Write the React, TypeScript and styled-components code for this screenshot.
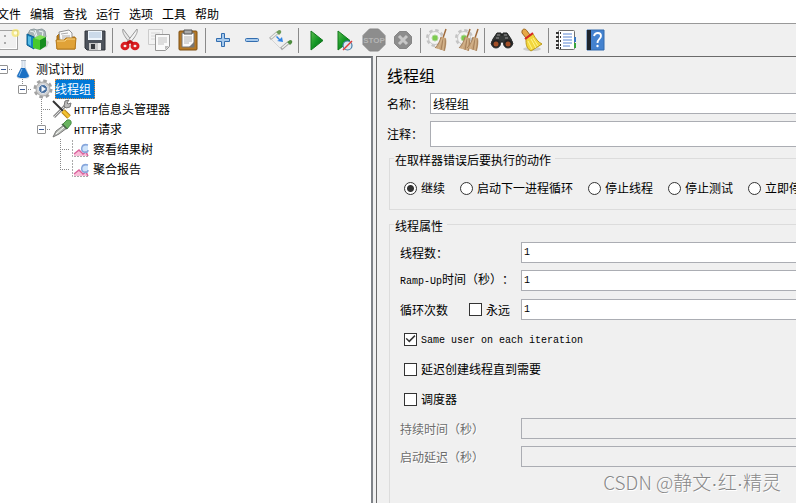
import React from "react";
import styled, { createGlobalStyle, css } from "styled-components";

const GlobalStyle = createGlobalStyle`
  * { box-sizing: border-box; }
  html, body { margin: 0; }
  body {
    background: #f0f0f0;
    color: #000;
    font: 12px/16px "Noto Sans CJK SC", sans-serif;
    text-spacing-trim: space-all;
    overflow: hidden;
  }
  button, input { font: inherit; color: inherit; margin: 0; }
`;

const Window = styled.div`
  position: relative;
  display: flex;
  flex-direction: column;
  height: 100vh;
  overflow: hidden;
`;

const MenuBar = styled.nav`
  display: flex;
  gap: 9px;
  height: 24px;
  padding-top: 6px;
  background: #fff;
  border-bottom: 1px solid #999;
  white-space: nowrap;
`;

const MenuItem = styled.button`
  flex: none;
  height: 16px;
  padding: 0;
  border: 0;
  background: none;
  line-height: 16px;
  &:first-child { margin-left: -3px; }
`;

const ToolBar = styled.div`
  display: flex;
  align-items: center;
  height: 32px;
  margin-left: -7px;
`;

const ToolButton = styled.button`
  display: grid;
  place-items: center;
  flex: 0 0 29px;
  height: 28px;
  padding: 0;
  border: 0;
  background: none;
`;

const ToolSeparator = styled.span`
  flex: 0 0 1px;
  height: 25px;
  margin: 0 2px 0 3px;
  background: #8a8a8a;
`;

const Split = styled.div`
  display: flex;
  flex: 1;
  gap: 3px;
  min-height: 0;
`;

const TreePane = styled.aside`
  flex: 0 0 373px;
  background: #fff;
  border: solid #7f8388;
  border-width: 2px 2px 0 0;
  border-top-color: #6b6e71;
  overflow: hidden;
`;

const TreeList = styled.ul`
  list-style: none;
  margin: 1px 0 0 -1px;
  padding: 0;
`;

const TreeRow = styled.li<{ $depth: number }>`
  display: flex;
  align-items: center;
  height: 20px;
  padding-left: ${(p) => p.$depth * 19}px;
  white-space: nowrap;
`;

const dotsDown = "repeating-linear-gradient(to bottom, #888 0 1px, transparent 1px 2px)";
const dotsAcross = "repeating-linear-gradient(to right, #888 0 1px, transparent 1px 2px)";

const Branch = styled.span<{ $line: number }>`
  display: flex;
  align-items: center;
  flex: 0 0 15px;
  height: 20px;
  background:
    ${dotsDown} 4px 0 / 1px ${(p) => p.$line}px no-repeat,
    ${dotsAcross} 4px 10px / 10px 1px no-repeat;
`;

const Handle = styled.button`
  width: 9px;
  height: 9px;
  padding: 0;
  border: 1px solid #929292;
  border-radius: 1px;
  background: linear-gradient(#3c5a96, #3c5a96) center / 5px 1px no-repeat #fff;
`;

const TreeIcon = styled.span`
  display: grid;
  flex: 0 0 20px;
  margin-right: 2px;
`;

const TreeLabel = styled.span<{ $selected?: boolean }>`
  height: 20px;
  line-height: 20px;
  ${(p) =>
    p.$selected &&
    css`
      padding-right: 4px;
      color: #fff;
      background: #0078d7;
      outline: 1px dotted #e08a38;
      outline-offset: -1px;
    `}
`;

const Latin = styled.span`
  font: 400 10px/16px "Liberation Mono", monospace;
`;

const Editor = styled.main`
  flex: 1;
  min-width: 0;
  display: flex;
  flex-direction: column;
  border: solid #6b6b6b;
  border-width: 1px 0 0 1px;
  padding-left: 10px;
  overflow: hidden;
`;

const Form = styled.form`
  display: flex;
  flex-direction: column;
  flex: 1;
  margin-right: -12px;
`;

const Title = styled.h1`
  margin: 6px 0;
  font-size: 16px;
  font-weight: 400;
  line-height: 24px;
`;

const Field = styled.div<{ $gap?: number }>`
  display: flex;
  align-items: center;
  margin-bottom: ${(p) => p.$gap ?? 7}px;
`;

const FieldLabel = styled.label<{ $wide?: boolean; $disabled?: boolean }>`
  flex: 0 0 ${(p) => (p.$wide ? 121 : 43)}px;
  white-space: nowrap;
  ${(p) => p.$disabled && "color: #6d6d6d; text-shadow: 1px 1px #fff;"}
`;

const TextInput = styled.input<{ $tall?: boolean }>`
  flex: 1;
  min-width: 0;
  height: ${(p) => (p.$tall ? 26 : 21)}px;
  padding: 0 2px;
  border: 1px solid #abadb3;
  border-radius: 0;
  background: #fff;
  &:disabled { background: #f0f0f0; }
`;

const NumberInput = styled(TextInput)`
  font: 400 10px/16px "Liberation Mono", monospace;
`;

const Group = styled.fieldset<{ $fill?: boolean }>`
  min-width: 0;
  margin: 0 0 0 2px;
  padding: 0 0 0 10px;
  border: 1px solid #dcdcdc;
  ${(p) => p.$fill && "flex: 1; border-bottom: 0; margin-top: 4px;"}
`;

const Legend = styled.legend`
  margin-left: -6px;
  padding: 4px 4px 0 1px;
  line-height: 16px;
`;

const RadioRow = styled.div`
  display: flex;
  gap: 15px;
  height: 41px;
  align-items: center;
  padding: 0 0 1px 4px;
`;

const Choice = styled.label`
  display: flex;
  align-items: center;
  gap: 4px;
  flex: none;
  white-space: nowrap;
`;

const Radio = styled.input.attrs({ type: "radio" })`
  appearance: none;
  width: 13px;
  height: 13px;
  border: 1px solid #333;
  border-radius: 50%;
  background: #fff;
  &:checked { background: radial-gradient(circle, #333 0 3px, #fff 4px); }
`;

const CheckBox = styled.input.attrs({ type: "checkbox" })`
  appearance: none;
  display: grid;
  place-items: center;
  width: 13px;
  height: 13px;
  border: 1px solid #333;
  background: #fff;
  &:checked::after {
    content: "";
    width: 11px;
    height: 11px;
    background: #333;
    clip-path: polygon(6% 48%, 16% 40%, 38% 62%, 86% 14%, 95% 24%, 39% 82%);
  }
`;

const CheckRow = styled.div`
  display: flex;
  align-items: center;
  height: 30px;
  padding-left: 4px;
`;

const GroupBody = styled.div`
  padding-top: 8px;
`;

const CheckRows = styled.div`
  margin: -3px 0 4px;
`;

const LoopLabel = styled.span`
  display: flex;
  flex: 0 0 121px;
  gap: 21px;
`;

const Watermark = styled.div`
  position: absolute;
  right: 15px;
  bottom: 5px;
  font: 300 19px/28px "Noto Sans CJK SC", sans-serif;
  color: #888;
  text-shadow: 1px 1px #fff;
  pointer-events: none;
`;

const Dot = styled.span`
  font-family: "Liberation Sans", sans-serif;
`;

const Svg = ({ children, size = 24 }: { children: React.ReactNode; size?: number }) => (
  <svg width={size} height={size} viewBox={`0 0 ${size} ${size}`} fill="none" aria-hidden="true">
    {children}
  </svg>
);

const NewIcon = () => (
  <Svg>
    <rect x="3.5" y="2.5" width="18" height="19" fill="#f0f0f0" stroke="#a2a2a2" />
    <path d="M4.500 20.500h16V4" stroke="#fff" />
    <path d="M9 7v2M9 14v2" stroke="#aaa" strokeWidth="2" />
    <circle cx="19.500" cy="5" r="4" fill="#f5e66b" opacity=".75" />
    <circle cx="19.500" cy="5" r="1.800" fill="#fffde0" />
  </Svg>
);

const TemplatesIcon = () => (
  <Svg>
    <path d="M14 21l8-2 2-5-3-2z" fill="#bbb" opacity=".7" />
    <path d="M3 6l2-4 4-1 3 1 5-1 3 2 1 6-5 3-9-2z" fill="#a9b5b8" stroke="#8c9a9e" />
    <path d="M5 3l4 1 2 5M10 2l2 6M14 3l4 1-1 5" stroke="#eef3f4" />
    <path d="M2 6l7 3v12l-7-4z" fill="#1682bd" stroke="#0b5f91" />
    <path d="M3 8l3 1v9l-3-2z" fill="#55bbe5" />
    <path d="M9 10l6-3 6 2-6 4z" fill="#80e253" />
    <path d="M8 10l7 2v10l-7-2z" fill="#48c92c" />
    <path d="M15 12l6-3v9l-6 4z" fill="#178d20" />
  </Svg>
);

const OpenIcon = () => (
  <Svg>
    <path d="M3 8l2-2h4l2 3h10v12H3z" fill="#b97a17" stroke="#a46a12" />
    <path d="M5 4l10-2 3 3v8H6z" fill="#fafafa" stroke="#949494" />
    <path d="M7 6l7-1M8 8h8M8 10h8" stroke="#aaa" />
    <path d="M2 12h8l2-2h10l-1 11H3z" fill="#e0a237" stroke="#b57a1d" />
    <path d="M3 13h8l2-2h8" stroke="#f8d487" />
  </Svg>
);

const SaveIcon = () => (
  <Svg>
    <path d="M2 3h20v19H4l-2-2z" fill="#4d535c" stroke="#30343a" />
    <path d="M5 3h14v9H5z" fill="#eef5fc" />
    <path d="M6 5h12M6 7h12M6 9h12" stroke="#a9bfd8" />
    <path d="M6 15h12v7H6z" fill="#c8c8c8" />
    <path d="M8 16h4v5H8z" fill="#36393d" />
    <path d="M15 15h3v7h-3z" fill="#ededed" />
  </Svg>
);

const CutIcon = () => (
  <Svg>
    <path d="M5 1c-1 3 1 6 3 9l4 5 2-2z" fill="#e7e7e7" stroke="#999" />
    <path d="M19 1c1 3-1 6-3 9l-5 6-2-2z" fill="#f3f3f3" stroke="#999" />
    <ellipse cx="7" cy="18" rx="3" ry="2.800" stroke="#d91d21" strokeWidth="3" />
    <ellipse cx="17" cy="18" rx="3" ry="2.800" stroke="#d91d21" strokeWidth="3" />
    <path d="M9 15.500l3-2 3 2" stroke="#c60e13" strokeWidth="3" />
  </Svg>
);

const CopyIcon = () => (
  <Svg>
    <path d="M1.500 1.500h14v15h-14z" fill="#f3f3f3" stroke="#ccc" />
    <path d="M4 5h9M4 8h6M4 11h4" stroke="#d6d6d6" />
    <path d="M8.500 6.500h14v12l-4 4h-10z" fill="#fafafa" stroke="#969696" />
    <path d="M22 18l-4 4v-4z" fill="#bbb" />
    <path d="M11 10h9M11 12h9M11 14h9M11 16h6" stroke="#c0c0c0" />
  </Svg>
);

const PasteIcon = () => (
  <Svg>
    <rect x="3" y="3" width="18" height="19" rx="1" fill="#b57825" stroke="#7e5014" />
    <path d="M6 5h12v14H6z" fill="#fbfbfb" stroke="#777" />
    <path d="M8 2h8v4H8z" fill="#aaa" stroke="#555" />
    <path d="M8 9h8M8 11h8M8 13h8M8 15h5" stroke="#b4b4b4" />
    <path d="M18 14l-5 5h5z" fill="#777" />
  </Svg>
);

const PlusIcon = () => (
  <Svg>
    <path d="M10.500 5.500h3v5h5v3h-5v5h-3v-5h-5v-3h5z" fill="#a6c9ec" stroke="#326daf" strokeLinejoin="round" />
  </Svg>
);

const MinusIcon = () => (
  <Svg>
    <rect x="5.500" y="10.500" width="13" height="3" rx="1" fill="#a6c9ec" stroke="#326daf" />
  </Svg>
);

const ToggleIcon = () => (
  <Svg>
    <path d="M1 11l7-6" stroke="#b5b5b5" strokeWidth="3" />
    <path d="M2 10l6-5" stroke="#f2f4ee" strokeWidth="1.500" />
    <path d="M7 4l3-2q3 0 2 3l-2 2z" fill="#6d9b58" />
    <path d="M12 21l7-6" stroke="#a5a5a5" strokeWidth="3" />
    <path d="M13 20l6-5" stroke="#f2f4ee" strokeWidth="1.500" />
    <path d="M18 14l3-2q3 0 2 3l-2 2z" fill="#4d8c3f" />
    <path d="M3 12l9 9" stroke="#d4d4d4" />
    <path d="M8 8l3 3 2-2 1 5-6-1 2-1-3-3z" fill="#2f83e6" />
  </Svg>
);

const Play = () => <path d="M6 3l12 9.500L6 22z" fill="url(#playFill)" stroke="#11791d" />;

const PlayIcon = () => (
  <Svg>
    <defs>
      <linearGradient id="playFill" x1="0" y1="0" x2="1" y2="1">
        <stop offset="0" stopColor="#5bbd4e" />
        <stop offset=".5" stopColor="#129725" />
        <stop offset="1" stopColor="#056615" />
      </linearGradient>
    </defs>
    <g transform="translate(1 0)"><Play /></g>
  </Svg>
);

const PlayNoTimersIcon = () => (
  <Svg>
    <g transform="translate(-1 0)"><Play /></g>
    <circle cx="14.500" cy="17.500" r="4.500" fill="#dce9f3" stroke="#457da8" strokeWidth="1.200" />
    <path d="M10 22l9-9" stroke="#e33b35" strokeWidth="1.500" />
  </Svg>
);

const StopIcon = () => (
  <Svg>
    <path d="M7.500 1h9L23 7.500v9L16.500 23h-9L1 16.500v-9z" fill="#8d8d8d" stroke="#868686" />
    <text x="12" y="15" textAnchor="middle" fontFamily="Liberation Sans" fontSize="8" fontWeight="700" fill="#b5b5b5">STOP</text>
  </Svg>
);

const ShutdownIcon = () => (
  <Svg>
    <path d="M8.500 3.500h7l5 5v7l-5 5h-7l-5-5v-7z" fill="#8d8d8d" stroke="#868686" />
    <path d="M8 8l8 8M16 8l-8 8" stroke="#c8c8c8" strokeWidth="3" />
  </Svg>
);

const ClearGear = () => (
  <>
    <circle cx="9" cy="10" r="7.500" stroke="#c4c4c4" strokeWidth="3" strokeDasharray="3.300 2.590" />
    <circle cx="9" cy="10" r="6.500" fill="#f4f4f4" stroke="#c9c9c9" />
    <circle cx="9" cy="10" r="3" fill="#7ccb4f" stroke="#b0d79a" />
  </>
);

const Broom = () => (
  <>
    <path d="M20 1l-3 9" stroke="#a06b3b" strokeWidth="1.500" />
    <path d="M15 9l5 1c1 4 0 8-1 13l-10-3c3-3 5-6 6-11z" fill="#c9a57c" />
    <path d="M15 9c-1 4-3 8-6 11M19 11c1 4 0 8-1 12M17 11l-2 11" stroke="#a5815c" />
    <path d="M16 11l-4 10M18 11l-1 11" stroke="#d3b48c" />
  </>
);

const ClearIcon = () => (
  <Svg><ClearGear /><Broom /></Svg>
);

const ClearAllIcon = () => (
  <Svg>
    <ClearGear />
    <g transform="translate(-5 0)"><Broom /></g>
    <g transform="translate(3 0)"><Broom /></g>
  </Svg>
);

const SearchIcon = () => (
  <Svg>
    <path d="M3 11l4-6h4l1 3 1-3h4l4 6 2 5-7 3-3-5h-2l-3 5-7-3z" fill="#363938" stroke="#202322" />
    <circle cx="6" cy="15.500" r="4.500" fill="#222" stroke="#353535" />
    <circle cx="18" cy="15.500" r="4.500" fill="#222" stroke="#353535" />
    <circle cx="6" cy="16" r="2.500" fill="#a34f27" />
    <circle cx="18" cy="16" r="2.500" fill="#a34f27" />
    <path d="M7 7h3M14 7h3M6 10h3M15 10h3" stroke="#999" />
  </Svg>
);

const ResetIcon = () => (
  <Svg>
    <ellipse cx="13" cy="21" rx="9" ry="2" fill="#ccc" />
    <path d="M3 3c1-3 4-2 5 0l3 4-4 3-4-5z" fill="#e7a947" stroke="#9b671f" />
    <path d="M7 11l7-5c3 5 5 8 9 10L12 23C7 20 7 16 7 11z" fill="#f2d63c" stroke="#bc991b" />
    <path d="M9 13l4 8M12 11l5 9M14 10l5 8" stroke="#fff38b" />
    <path d="M6 11l8-6" stroke="#d72724" strokeWidth="2" />
  </Svg>
);

const LogIcon = () => (
  <Svg>
    <rect x="4.500" y="2.500" width="16" height="19" rx="1" fill="#fff" stroke="#707070" />
    <path d="M9 6h9M9 9h9M9 12h9M9 15h9M9 18h7" stroke="#5b86d4" />
    <path d="M2 5h5M2 9h5M2 13h5M2 17h5M2 20h5" stroke="#333" strokeWidth="2" strokeDasharray="3 1" />
    <path d="M20 9h2v5h-2z" fill="#3877c1" />
    <path d="M20 15h2v5h-2z" fill="#36a53b" />
  </Svg>
);

const HelpIcon = () => (
  <Svg>
    <path d="M4 2h17v20H4z" fill="#4482cf" stroke="#326aad" />
    <path d="M4 2h4v20H4z" fill="#20262f" />
    <path d="M11 8c1-4 7-4 7 0 0 3-3.500 3-3.500 7" stroke="#fff" strokeWidth="1.800" />
    <circle cx="14.500" cy="18" r="1.200" fill="#fff" />
  </Svg>
);

const FlaskIcon = () => (
  <Svg size={20}>
    <path d="M8 2v6l-5 9q0 2 2 2h8q2 0 2-2l-4-9V2" fill="#e4edf6" stroke="#c3cedb" />
    <path d="M7 9l-4 8q1 2 6 2t6-2l-4-8z" fill="#1b70c4" />
    <path d="M8 10l-3 7" stroke="#82b9ed" />
    <path d="M7 1.500h5" stroke="#a9b2bd" />
  </Svg>
);

const GearIcon = () => (
  <Svg size={20}>
    <circle cx="10" cy="10" r="8" stroke="#a2a2a2" strokeWidth="3" strokeDasharray="3.500 2.783" />
    <circle cx="10" cy="10" r="7" fill="#d2d2d2" stroke="#a8a8a8" />
    <circle cx="10" cy="10" r="4.500" fill="#476f9f" stroke="#e4e8ee" />
    <path d="M8.500 7l4.500 3-4.500 3z" fill="#f2f6fb" />
  </Svg>
);

const ToolsIcon = () => (
  <Svg size={20}>
    <path d="M2 18L14 6" stroke="#888" strokeWidth="3" />
    <path d="M2 18L14 6" stroke="#ddd" />
    <path d="M12 7l1-5 4-1-2 3 1 1 3-1-1 4-4 1z" fill="#bbb" stroke="#777" />
    <path d="M1 2l10 10" stroke="#333" strokeWidth="2" />
    <path d="M11 12l6 6" stroke="#b58217" strokeWidth="5" />
    <path d="M11 12l6 6" stroke="#f2c12f" strokeWidth="3" />
  </Svg>
);

const DropperIcon = () => (
  <Svg size={20}>
    <path d="M1 18l3-6 8-6 3 3-8 6z" fill="#b9bdb7" stroke="#777" />
    <path d="M4 15l8-7" stroke="#fff" />
    <path d="M11 5l4-4q5-1 4 4l-4 5z" fill="#69b35f" stroke="#4a8e45" />
    <path d="M10 5l5 5" stroke="#4b674b" strokeWidth="1.500" />
  </Svg>
);

const ChartIcon = () => (
  <Svg size={20}>
    <path d="M3 17v-2l5-4 3 4 5-2 1 4z" fill="#f7bed8" />
    <path d="M11 13c-2-5 1-9 6-7v8l-3 1z" fill="#cee3fa" />
    <path d="M3 15l5-4 4 4 3-2 2 4" stroke="#d9639c" strokeWidth="1.500" />
    <path d="M17 6c-7-2-8 6-4 7q4 1 4-2" stroke="#86a6dc" strokeWidth="1.500" />
    <path d="M1.500 1v16.500h16" stroke="#aaa" strokeDasharray="2 1" />
  </Svg>
);

const menus = ["文件", "编辑", "查找", "运行", "选项", "工具", "帮助"];

const tools: ([string, React.FC] | null)[] = [
  ["新建", NewIcon], ["模板", TemplatesIcon], ["打开", OpenIcon], ["保存", SaveIcon], null,
  ["剪切", CutIcon], ["复制", CopyIcon], ["粘贴", PasteIcon], null,
  ["展开", PlusIcon], ["折叠", MinusIcon], ["切换", ToggleIcon], null,
  ["启动", PlayIcon], ["无间隔启动", PlayNoTimersIcon], ["停止", StopIcon], ["关闭", ShutdownIcon], null,
  ["清除", ClearIcon], ["清除全部", ClearAllIcon], null,
  ["搜索", SearchIcon], ["重置搜索", ResetIcon], null,
  ["函数助手", LogIcon], ["帮助", HelpIcon],
];

interface TreeNode {
  depth: number;
  line: number;
  icon: React.FC;
  label: string;
  latin?: string;
  open?: boolean;
  selected?: boolean;
}

const nodes: TreeNode[] = [
  { depth: 0, line: 0, icon: FlaskIcon, label: "测试计划", open: true },
  { depth: 1, line: 10, icon: GearIcon, label: "线程组", open: true, selected: true },
  { depth: 2, line: 20, icon: ToolsIcon, latin: "HTTP", label: "信息头管理器" },
  { depth: 2, line: 10, icon: DropperIcon, latin: "HTTP", label: "请求", open: true },
  { depth: 3, line: 20, icon: ChartIcon, label: "察看结果树" },
  { depth: 3, line: 10, icon: ChartIcon, label: "聚合报告" },
];

const actions = ["继续", "启动下一进程循环", "停止线程", "停止测试", "立即停止测试"];

export default function App() {
  return (
    <Window>
      <GlobalStyle />
      <MenuBar>
        {menus.map((m) => <MenuItem key={m}>{m}</MenuItem>)}
      </MenuBar>
      <ToolBar role="toolbar">
        {tools.map((t, i) => {
          if (!t) return <ToolSeparator key={i} />;
          const [name, Icon] = t;
          return <ToolButton key={i} aria-label={name}><Icon /></ToolButton>;
        })}
      </ToolBar>
      <Split>
        <TreePane>
          <TreeList>
            {nodes.map(({ icon: Icon, ...n }) => (
              <TreeRow key={n.label} $depth={n.depth}>
                <Branch $line={n.line}>{n.open && <Handle aria-label="折叠" />}</Branch>
                <TreeIcon><Icon /></TreeIcon>
                <TreeLabel $selected={n.selected}>
                  {n.latin && <Latin>{n.latin}</Latin>}{n.label}
                </TreeLabel>
              </TreeRow>
            ))}
          </TreeList>
        </TreePane>
        <Editor>
          <Form onSubmit={(e) => e.preventDefault()}>
            <Title>线程组</Title>
            <Field>
              <FieldLabel htmlFor="name">名称：</FieldLabel>
              <TextInput id="name" defaultValue="线程组" />
            </Field>
            <Field $gap={1}>
              <FieldLabel htmlFor="comment">注释：</FieldLabel>
              <TextInput id="comment" $tall />
            </Field>
            <Group>
              <Legend>在取样器错误后要执行的动作</Legend>
              <RadioRow>
                {actions.map((a, i) => (
                  <Choice key={a}><Radio name="action" defaultChecked={i === 0} />{a}</Choice>
                ))}
              </RadioRow>
            </Group>
            <Group $fill>
              <Legend>线程属性</Legend>
              <GroupBody>
                <Field>
                  <FieldLabel $wide htmlFor="threads">线程数：</FieldLabel>
                  <NumberInput id="threads" defaultValue="1" />
                </Field>
                <Field $gap={8}>
                  <FieldLabel $wide htmlFor="ramp"><Latin>Ramp-Up</Latin>时间（秒）：</FieldLabel>
                  <NumberInput id="ramp" defaultValue="1" />
                </Field>
                <Field>
                  <LoopLabel>
                    <label htmlFor="loops">循环次数</label>
                    <Choice><CheckBox />永远</Choice>
                  </LoopLabel>
                  <NumberInput id="loops" defaultValue="1" />
                </Field>
                <CheckRows>
                  <CheckRow>
                    <Choice><CheckBox defaultChecked /><span><Latin>Same user on each iteration</Latin></span></Choice>
                  </CheckRow>
                  <CheckRow><Choice><CheckBox />延迟创建线程直到需要</Choice></CheckRow>
                  <CheckRow><Choice><CheckBox />调度器</Choice></CheckRow>
                </CheckRows>
                <Field>
                  <FieldLabel $wide $disabled htmlFor="duration">持续时间（秒）</FieldLabel>
                  <TextInput id="duration" disabled />
                </Field>
                <Field>
                  <FieldLabel $wide $disabled htmlFor="delay">启动延迟（秒）</FieldLabel>
                  <TextInput id="delay" disabled />
                </Field>
              </GroupBody>
            </Group>
          </Form>
        </Editor>
      </Split>
      <Watermark>CSDN @静文<Dot>·</Dot>红<Dot>·</Dot>精灵</Watermark>
    </Window>
  );
}
